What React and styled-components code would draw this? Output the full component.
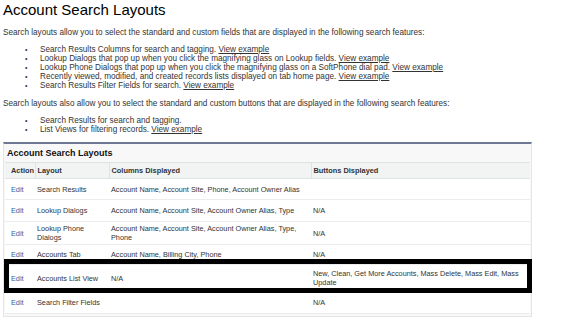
import styled, { createGlobalStyle } from 'styled-components'

const GlobalStyle = createGlobalStyle`
  body {
    margin: 0;
    background: #fff;
    font-family: "Liberation Sans", Arial, sans-serif;
    color: #333;
  }
`

const Page = styled.div`
  width: 563px;
  height: 326px;
  overflow: hidden;
  padding: 1px 3px 0;
  box-sizing: border-box;
`

const Title = styled.h1`
  margin: 0;
  font-size: 15px;
  line-height: 18px;
  font-weight: normal;
  color: #000;
`

const Para = styled.p`
  margin: ${(p) => p.$top || 9}px 0 0;
  font-size: 8.2px;
  line-height: 9px;
`

const List = styled.ul`
  margin: ${(p) => p.$top || 8}px 0 0;
  padding-left: 37px;
  list-style: none;
  font-size: 8.2px;
  line-height: 9px;
`

const Item = styled.li`
  &::before {
    content: '•';
    display: inline-block;
    width: 15px;
    margin-left: -15px;
    font-size: 7px;
  }
`

const Link = styled.a`
  color: #333;
  text-decoration: underline;
  cursor: pointer;
`

const Panel = styled.div`
  position: relative;
  margin-top: 8px;
  width: 529px;
  border: 1px solid #e3e5e8;
  border-top: 2px solid #6e7893;
  background: #f8f8f8;
  padding: 0 1px 2px;
  box-sizing: border-box;
`

const PanelTitle = styled.div`
  padding: 4px 2px 3px;
  font-size: 9px;
  line-height: 11px;
  font-weight: bold;
  color: #111;
`

const Table = styled.table`
  width: 100%;
  border-collapse: collapse;
  background: #fff;
  table-layout: fixed;
`

const Th = styled.th`
  background: #f2f3f3;
  border-top: 1px solid #e0e3e5;
  border-bottom: 1px solid #e0e3e5;
  border-left: ${(p) => (p.$first ? 'none' : '1px solid #e0e3e5')};
  padding: 3px 2px 3px ${(p) => (p.$first ? 6 : 2)}px;
  text-align: left;
  font-size: 7.4px;
  line-height: 9px;
  font-weight: bold;
  color: #333;
  white-space: nowrap;
`

const Td = styled.td`
  height: ${(p) => p.$h}px;
  padding: 0 2px 0 ${(p) => (p.$first ? 6 : 2)}px;
  border-bottom: 1px solid #ececec;
  font-size: 7.3px;
  line-height: 9px;
  color: #333;
  vertical-align: middle;
`

const EditLink = styled.a`
  color: #2f62a8;
  text-decoration: none;
  cursor: pointer;
`

const Highlight = styled.div`
  position: absolute;
  left: 0;
  right: -1px;
  top: ${(p) => p.$top}px;
  height: ${(p) => p.$h}px;
  border: 5px solid #000;
  box-sizing: border-box;
  pointer-events: none;
`

const rows = [
  { layout: 'Search Results', columns: 'Account Name, Account Site, Phone, Account Owner Alias', buttons: '', h: 20 },
  { layout: 'Lookup Dialogs', columns: 'Account Name, Account Site, Account Owner Alias, Type', buttons: 'N/A', h: 21 },
  { layout: 'Lookup Phone Dialogs', columns: 'Account Name, Account Site, Account Owner Alias, Type, Phone', buttons: 'N/A', h: 22 },
  { layout: 'Accounts Tab', columns: 'Account Name, Billing City, Phone', buttons: 'N/A', h: 19 },
  { layout: 'Accounts List View', columns: 'N/A', buttons: 'New, Clean, Get More Accounts, Mass Delete, Mass Edit, Mass Update', h: 26 },
  { layout: 'Search Filter Fields', columns: '', buttons: 'N/A', h: 21 },
]

const App = () => {
  return (
    <Page>
      <GlobalStyle />
      <Title>Account Search Layouts</Title>
      <Para>
        Search layouts allow you to select the standard and custom fields that are displayed in the following search features:
      </Para>
      <List>
        <Item>Search Results Columns for search and tagging. <Link>View example</Link></Item>
        <Item>Lookup Dialogs that pop up when you click the magnifying glass on Lookup fields. <Link>View example</Link></Item>
        <Item>Lookup Phone Dialogs that pop up when you click the magnifying glass on a SoftPhone dial pad. <Link>View example</Link></Item>
        <Item>Recently viewed, modified, and created records lists displayed on tab home page. <Link>View example</Link></Item>
        <Item>Search Results Filter Fields for search. <Link>View example</Link></Item>
      </List>
      <Para $top={9}>
        Search layouts also allow you to select the standard and custom buttons that are displayed in the following search features:
      </Para>
      <List>
        <Item>Search Results for search and tagging.</Item>
        <Item>List Views for filtering records. <Link>View example</Link></Item>
      </List>

      <Panel>
        <PanelTitle>Account Search Layouts</PanelTitle>
        <Table>
          <colgroup>
            <col style={{ width: 30 }} />
            <col style={{ width: 74 }} />
            <col style={{ width: 202 }} />
            <col />
          </colgroup>
          <thead>
            <tr>
              <Th $first>Action</Th>
              <Th>Layout</Th>
              <Th>Columns Displayed</Th>
              <Th>Buttons Displayed</Th>
            </tr>
          </thead>
          <tbody>
            {rows.map((r) => (
              <tr key={r.layout}>
                <Td $h={r.h} $first><EditLink>Edit</EditLink></Td>
                <Td $h={r.h}>{r.layout}</Td>
                <Td $h={r.h}>{r.columns}</Td>
                <Td $h={r.h}>{r.buttons}</Td>
              </tr>
            ))}
          </tbody>
        </Table>
        <Highlight $top={115} $h={34} />
      </Panel>
    </Page>
  )
}

export default App
